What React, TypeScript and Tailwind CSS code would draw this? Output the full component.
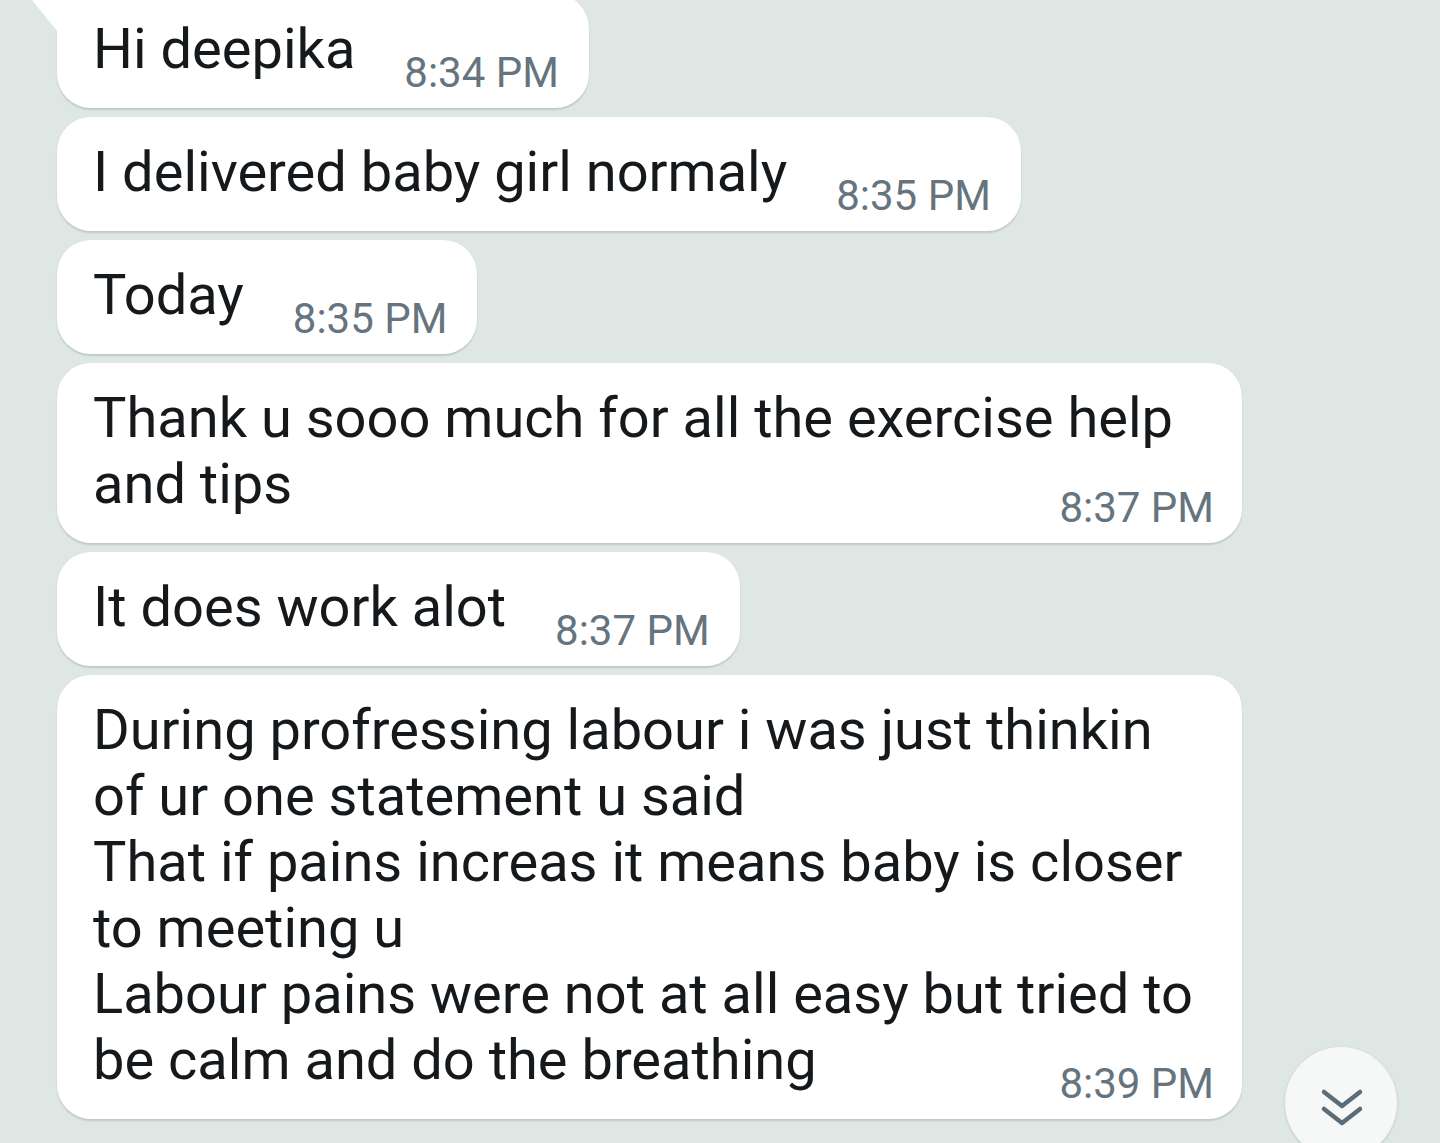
import React from "react";

const font = { fontFamily: "Roboto, 'Noto Sans', sans-serif" };

function Single({ text, time, tail = false }: { text: string; time: string; tail?: boolean }) {
  return (
    <div
      className={`relative flex w-fit items-start gap-[49px] bg-white pl-[36px] pr-[30px] pt-[22px] pb-[11px] rounded-[34px] shadow-[0_1.5px_1.5px_rgba(40,60,55,0.16)] ${
        tail ? "rounded-tl-none" : ""
      }`}
    >
      {tail && (
        <div className="absolute left-[-30px] top-0 h-[38px] w-[31px] bg-white [clip-path:polygon(0_0,100%_0,100%_100%)]" />
      )}
      <div className="text-[56px] leading-[66px] text-[#15191c] whitespace-nowrap">{text}</div>
      <div className="mt-[33px] text-[42px] leading-[48px] text-[#65747e] whitespace-nowrap">{time}</div>
    </div>
  );
}

function Multi({ text, time }: { text: string; time: string }) {
  return (
    <div className="w-fit max-w-[1185px] bg-white pl-[36px] pr-[28px] pt-[22px] pb-[11px] rounded-[34px] shadow-[0_1.5px_1.5px_rgba(40,60,55,0.16)]">
      <div className="text-[56px] leading-[66px] text-[#15191c] whitespace-pre-line">{text}</div>
      <div className="mt-[-33px] text-right text-[42px] leading-[48px] text-[#65747e]">{time}</div>
    </div>
  );
}

export default function App() {
  return (
    <div
      className="relative h-[1143px] w-[1440px] overflow-hidden bg-[#dee7e3]"
      style={font}
    >
      <div className="flex flex-col gap-[9px] pl-[57px] mt-[-6px]">
        <Single text="Hi deepika" time="8:34 PM" tail />
        <Single text="I delivered baby girl normaly" time="8:35 PM" />
        <Single text="Today" time="8:35 PM" />
        <Multi text="Thank u sooo much for all the exercise help and tips" time="8:37 PM" />
        <Single text="It does work alot" time="8:37 PM" />
        <Multi
          text={
            "During profressing labour i was just thinkin of ur one statement u said\nThat if pains increas it means baby is closer to meeting u\nLabour pains were not at all easy but tried to be calm and do the breathing"
          }
          time="8:39 PM"
        />
      </div>
      <div className="absolute left-[1285px] top-[1047px] flex h-[112px] w-[112px] items-start justify-center pt-[39px] rounded-full bg-[#f6f8f8] shadow-[0_1px_3px_rgba(40,60,55,0.18)]">
        <svg width="44" height="44" viewBox="0 0 44 44" fill="none" className="ml-[2px]">
          <path d="M4 6 L22 20 L40 6" stroke="#5d6d78" strokeWidth="4.5" strokeLinecap="round" strokeLinejoin="round" />
          <path d="M4 23 L22 37 L40 23" stroke="#5d6d78" strokeWidth="4.5" strokeLinecap="round" strokeLinejoin="round" />
        </svg>
      </div>
    </div>
  );
}
